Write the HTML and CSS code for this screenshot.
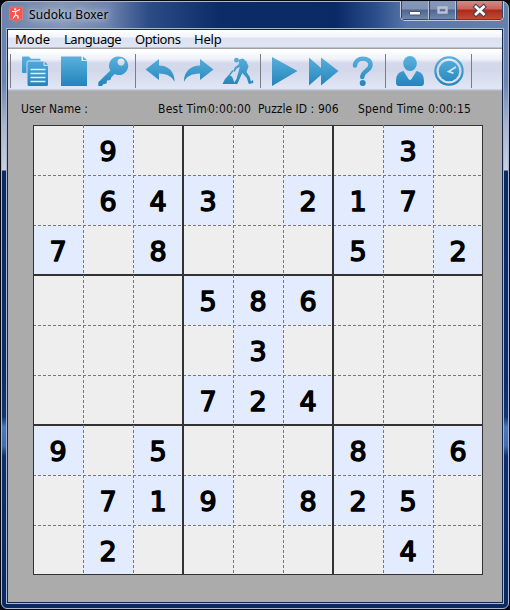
FILE: index.html
```html
<!DOCTYPE html>
<html lang="en">
<head>
<meta charset="utf-8">
<title>Sudoku Boxer</title>
<link rel="stylesheet" href="styles.css">
</head>
<body>
<div class="window">
  <header class="titlebar">
    <svg class="app-icon" width="14" height="17" viewBox="0 0 14 17"><path d="M.5 1h13v12.500H10L7 16.500 4 13.500H.5z" fill="#f4574b" stroke="#f7796e" stroke-width=".7"/><circle cx="6.200" cy="3.300" r="1.100" fill="#fff"/><path d="M3 5.500h4l4-2M6.500 5.500v3.500L4 12.500M6.500 9l2.500 1.200v2.500" fill="none" stroke="#fff" stroke-width="1.200"/></svg>
    <span class="title">Sudoku Boxer</span>
    <div class="caption">
      <div class="cap min"><svg width="27" height="19"><rect x="8.500" y="10.500" width="11" height="3.500" rx=".5" fill="#fff" stroke="#4b5570"/></svg></div>
      <div class="cap max"><svg width="26" height="19"><path d="M9.500 6.500h8v5h-8z" fill="none" stroke="#b9c1d2" stroke-width="2.500"/></svg></div>
      <div class="cap close"><svg width="47" height="19"><path d="M20 6l7.500 7M27.500 6L20 13" stroke="#41415a" stroke-width="4.800" stroke-linecap="square"/><path d="M20 6l7.500 7M27.500 6L20 13" stroke="#fff" stroke-width="2.700" stroke-linecap="square"/></svg></div>
    </div>
  </header>
  <main class="client">
    <nav class="menu"><span class="m1">Mode</span><span class="m2">Language</span><span class="m3">Options</span><span class="m4">Help</span></nav>
    <div class="toolbar">
      <div class="group">
        <svg viewBox="15 54 39 34"><defs><linearGradient id="ink" gradientUnits="userSpaceOnUse" x1="0" y1="56" x2="0" y2="86"><stop offset="0" stop-color="#5ab1de"/><stop offset="1" stop-color="#2384ba"/></linearGradient></defs>
          <path d="M22 57.500q0-1 1-1h6l2 2.200h8.500q1 0 1 1v.8H29q-2.500 0-2.500 2.500v10H23q-1 0-1-1z"/><path d="M28 61.500h15.500v4.500h4.500v18.500q0 1.500-1.500 1.500H29q-1.500 0-1.500-1.500V62zM44.700 61.500l3.300 3.300h-3.300z"/><path class="cut" d="M30.500 69.500h15M30.500 73.500h15M30.500 77.500h15M30.500 81.500h15"/></svg>
        <svg viewBox="54 54 39 34"><path d="M61 56.500h20.500v4.500h5.500v25H61zM83 56.500l4 3.500h-4z"/></svg>
        <svg viewBox="93 54 39 34"><path fill-rule="evenodd" d="M118.500 56.500a9.300 9.300 0 1 1-3.800 17.600l-3.200 3-1.200 3-3.300.3-.5 3.200-3.500.7-.8 1.700h-3.900v-3.800l12-11.700a9.300 9.300 0 0 1 8.200-14zM121 58.500a3.600 3.600 0 1 0 .1 0z"/></svg>
      </div>
      <div class="group">
        <svg viewBox="140 54 39 34"><path d="M145.500 69.500L159 59v6.500c9 0 16 6 15.500 16.500-2-5-7-8.500-15.500-8.500V80z"/></svg>
        <svg viewBox="179 54 39 34"><path d="M213.500 69.500L200 59v6.500c-9 0-16.500 6-16 16.500 2-5 7-8.500 16-8.500V80z"/></svg>
        <svg viewBox="218 54 39 34"><circle cx="236.500" cy="60.200" r="2.400"/><path d="M239 59.500l4-1 3.500 3 2 5-2 5.500 3 4.500 1.500 5 2-1.500.3 3-4.500 1-2-6-4.500-5-2.500 5.500-2.500 5.500h-4.300l3.300-4.500 2-7 1.500-5.500-3.500 1.800-1.500 3-1.500-.5 1.500-4 4-3z"/><path d="M233 70.500l-6.500 8.500" fill="none" stroke="url(#ink)" stroke-width="1.300"/><path d="M222.500 84l2.500-5 4-4 3 1.500 1.500 3.500 1 4z"/></svg>
      </div>
      <div class="group">
        <svg viewBox="265 54 39 34"><path d="M272 57l25.500 14L272 86z"/></svg>
        <svg viewBox="304 54 39 34"><path d="M309 57.500l12 10.500V57.500L338.500 71 321 85.500V75l-12 10.500z"/></svg>
        <svg viewBox="343 54 39 34"><path d="M355 65.500c.3-9 15.500-9 15.500-.8 0 6-8.200 6-8.200 12.300" fill="none" stroke="url(#ink)" stroke-width="4.500" stroke-linecap="round"/><circle cx="362.700" cy="83" r="3"/></svg>
      </div>
      <div class="group last">
        <svg viewBox="390 54 39 34"><ellipse cx="410" cy="63.500" rx="6.800" ry="7.500"/><path d="M403.500 71l5 8q1.500 1.800 3 0l5-8c5 1.300 7.500 3.500 7.500 11 0 3-1 4-3 4h-22c-2 0-3-1-3-4 0-7.500 2.500-9.700 7.500-11z"/></svg>
        <svg viewBox="429 54 39 34"><circle cx="449" cy="71" r="13.600" fill="none" stroke="url(#ink)" stroke-width="2.200"/><circle cx="449" cy="71" r="10.300"/><path d="M456 67l-7.500 4.500 5 1.800" fill="none" stroke="#d8ebf7" stroke-width="1.500"/></svg>
      </div>
    </div>
    <section class="info">
      <span class="user">User Name :</span><span class="best">Best Time</span><span class="time">0:00:00</span><span class="puzzle">Puzzle ID :</span><span class="id">906</span><span class="spend">Spend Time</span><span class="time">0:00:15</span>
    </section>
    <section class="board" id="board"></section>
  </main>
</div>
<script src="board.js"></script>
</body>
</html>
```
FILE: styles.css
```css
* { box-sizing: border-box; }
body { margin: 0; padding: 1px; width: 510px; height: 610px; overflow: hidden; background: #08090f; font-family: "Noto Sans", sans-serif; }
.window {
  width: 508px; height: 608px; padding: 0 5px 5px; border: 1px solid #a9b8d2; border-radius: 7px 7px 6px 6px;
  background:
    linear-gradient(90deg, #6c83ac 0, #8496b4 12%, #6c83ad 21%, #2c4c86 29%, #0c2c68 43%, #0a2a66 66%, #2c4f8c 74%, #5876a8 80%, #6680ac 100%) 0 0 / 100% 27px no-repeat,
    linear-gradient(#6880ad 0, #6d84af 80px, #a9b4cb 122px, #c9cfdd 168px, #0b2a64 169px, #0c2d6a 380px, #12356f 415px, #4a78bd 425px, #3f6cb2 444px, #0e2f6c 454px, #0a2862 100%);
}
.titlebar { height: 27px; display: flex; align-items: flex-start; padding-left: 1px; }
.app-icon { margin: 4px 6px 0 1px; }
.title { flex: 1; font-size: 12px; line-height: 16px; margin-top: 5px; letter-spacing: .1px; color: #000; text-shadow: 0 0 5px #d0d9e6, 0 0 9px #c1cbde, 0 0 14px #b0bdd4; }
.caption { display: flex; height: 20px; border: 1px solid #c3cbdc; border-top: 0; border-radius: 0 0 5px 5px; overflow: hidden; margin-right: -1px; margin-top: -1px; }
.cap { height: 19px; background: linear-gradient(#8397b8 0, #8193b3 45%, #4e6590 50%, #7087b1 100%); border: 1px solid #35466b; border-top: 0; }
.cap svg { display: block; margin-left: -1px; }
.min { width: 28px; border-right-color: #b8c3d8; }
.max { width: 27px; border-right-color: #b8c3d8; }
.close { width: 47px; background: linear-gradient(#cf8d88 0, #c96258 45%, #a92a1c 50%, #c44a32 100%); }
.client { width: 496px; height: 574px; border: 1px solid #14264b; box-shadow: 0 0 0 1px #a9b8d2; background: #ababab; display: flex; flex-direction: column; }
.menu { height: 20px; flex: none; display: flex; padding-left: 7px; font-size: 13px; line-height: 18px; color: #000; background: linear-gradient(#fff 0, #f3f5fb 7px, #dce2f2 8px, #dfe5f5 17px, #a0a0a0 18px, #a0a0a0 19px, #fff 19px); }
.m1 { width: 49px; } .m2 { width: 71px; letter-spacing: -.45px; } .m3 { width: 59px; letter-spacing: -.4px; } .m4 { letter-spacing: -.2px; }
.menu span { white-space: nowrap; }
.toolbar { height: 41px; flex: none; display: flex; padding: 4px 0 0 2px; background: linear-gradient(#fff 0, #f0f2f9 9px, #d4d9eb 13px, #d2d8ea 20px, #e1e6f5 38px, #dfe4f4 39px, #b3b8c9 40px); }
.group { width: 125px; height: 34px; display: flex; padding-left: 4px; border-left: 1px solid #7c7c83; }
.group.last { width: 87px; border-right: 1px solid #7c7c83; }
.group svg { width: 39px; height: 34px; flex: none; fill: url(#ink); }
.group .cut { fill: none; stroke: #e2edf8; stroke-width: 1.500; }
.info { height: 34px; flex: none; display: flex; padding: 9px 0 0 13px; font: 12px/18px "DejaVu Sans Condensed", sans-serif; color: #0a0a0a; }
.info span { white-space: nowrap; overflow: hidden; }
.user { width: 137px; } .best { width: 50px; letter-spacing: .25px; } .time { width: 50px; letter-spacing: .2px; } .puzzle { width: 60px; } .id { width: 40px; } .spend { width: 70px; letter-spacing: .2px; }
.board { width: 450px; height: 450px; margin-left: 25px; display: grid; grid-template-columns: repeat(9, 50px); grid-template-rows: repeat(9, 50px); }
.cell { --v: repeating-linear-gradient(#777 0 3px, #fff0 3px 5px); --h: repeating-linear-gradient(90deg, #777 0 3px, #fff0 3px 5px); background: var(--v) 0 0 / 1px 100% no-repeat, var(--h) 0 0 / 100% 1px no-repeat, var(--bg); --bg: #eee; }
.cell.given { --bg: #e3ecff; }
.cell.left { --v: linear-gradient(#333, #333); }
.cell.top { --h: linear-gradient(#333, #333); }
.cell.thick-right { border-right: 1px solid #333; }
.cell.thick-bottom { border-bottom: 1px solid #333; }
.cell svg { display: block; width: 50px; height: 50px; overflow: visible; }
.cell text { font: 27px "DejaVu Sans", sans-serif; fill: #000; stroke: #000; stroke-width: 1.500; stroke-linejoin: round; text-anchor: middle; }
```
FILE: board.js
```js
const rows = [
  ".9.....3.",
  ".643.217.",
  "7.8...5.2",
  "...586...",
  "....3....",
  "...724...",
  "9.5...8.6",
  ".719.825.",
  ".2.....4."
];
const edge = i => i % 3 === 2;
document.getElementById("board").innerHTML = rows.map((row, y) =>
  [...row].map((n, x) => {
    const names = ["cell"];
    if (n !== ".") names.push("given");
    if (x % 3 === 0) names.push("left");
    if (y % 3 === 0) names.push("top");
    if (edge(x)) names.push("thick-right");
    if (edge(y)) names.push("thick-bottom");
    const digit = n === "." ? "" : `<svg viewBox="0 0 50 50"><text x="25" y="36">${n}</text></svg>`;
    return `<div class="${names.join(" ")}">${digit}</div>`;
  }).join("")
).join("");
```
